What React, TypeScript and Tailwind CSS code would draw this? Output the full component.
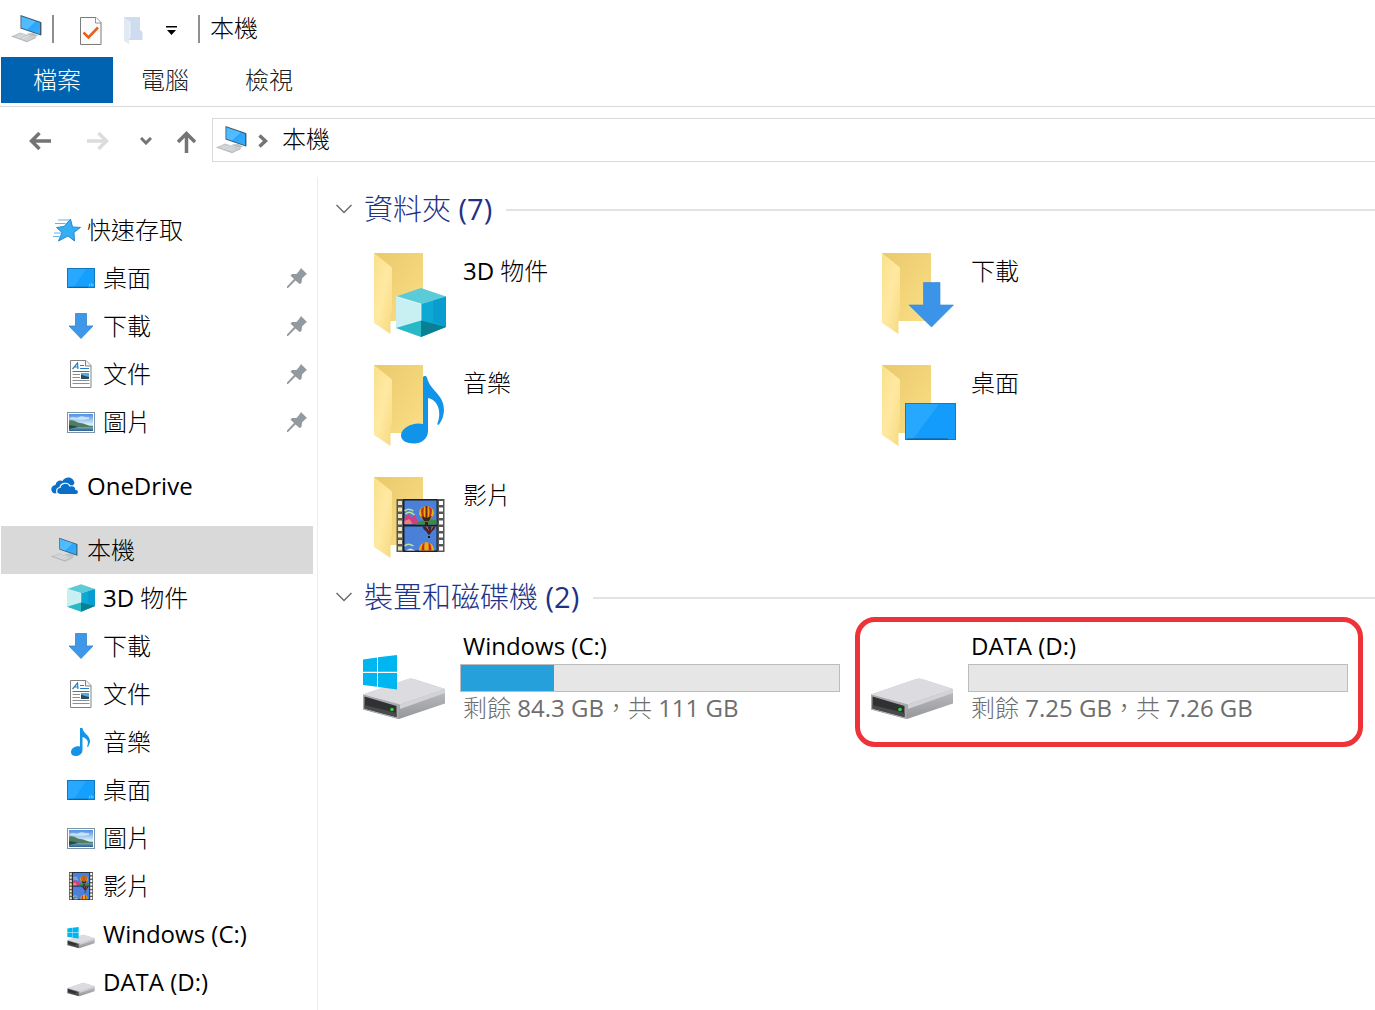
import { useState } from "react";
import type { ReactNode } from "react";

type IconProps = { className?: string };

function ComputerIcon({ className }: IconProps) {
  return (
    <svg viewBox="0 0 32 30" className={className} aria-hidden="true">
      <defs>
        <linearGradient id="screen" x1="0" y1="0" x2="1" y2="1">
          <stop offset="0" stopColor="#4db8ff" />
          <stop offset="0.5" stopColor="#52bdff" />
          <stop offset="0.55" stopColor="#2ba6fa" />
          <stop offset="1" stopColor="#36adfb" />
        </linearGradient>
      </defs>
      <path d="M16 19.500l6-.5 5 2.500-3 1.500-7-2z" fill="#b9bfc4" />
      <path d="M9.500 1l20.500 7v13.500L9.500 14.500z" fill="#3b5568" />
      <path d="M10.300 2.200l18.700 6.500v11.500L10.300 13.800z" fill="url(#screen)" />
      <path d="M29.900 8l.8.600v12.500l-.8.500z" fill="#8c979e" />
      <path d="M.5 22.200l8.500-3.600 16 5-9 4.200z" fill="#c4c7c9" />
      <path d="M3.500 22l14 4.400M5.500 21.100l14 4.400M7.500 20.200l14 4.400M6 24l8-3.900M10.500 25.200l8-3.700" stroke="#e6e8e9" strokeWidth="0.500" fill="none" />
      <path d="M.5 22.200l15.500 5.600 9-4.200" stroke="#8e9295" strokeWidth="0.500" fill="none" />
    </svg>
  );
}

function CheckDocIcon({ className }: IconProps) {
  return (
    <svg viewBox="0 0 22 28" className={className} aria-hidden="true">
      <path d="M.5.5h15.500l5 5v22H.5z" fill="#fbfbfb" stroke="#7b7b7b" />
      <path d="M15.500.5v5.500h5.500" fill="#fff" stroke="#7b7b7b" strokeWidth="0.800" />
      <path d="M3.500 15.500l5 5L18 10.500" fill="none" stroke="#e8601c" strokeWidth="2.600" />
    </svg>
  );
}

function PaleFolderIcon({ className }: IconProps) {
  return (
    <svg viewBox="0 0 19 27" className={className} aria-hidden="true">
      <path d="M0 0h16v13l2.500 2v8H5z" fill="#cfdcf0" />
      <path d="M0 .5l6 4V21l-1 1v5l-5-3z" fill="#e1e9f5" />
      <path d="M6 4.500V21" stroke="#f3f6fb" strokeWidth="0.800" />
    </svg>
  );
}

function StarIcon({ className }: IconProps) {
  return (
    <svg viewBox="0 0 28 24" className={className} aria-hidden="true">
      <path d="M17.500 1l2 8 8 .4-6.500 5 .5 8.600-6.500-5L5.500 23l3.500-8.500-5.500-5 7.500-1z" fill="#35aef3" stroke="#1b83c9" strokeWidth="0.900" />
      <path d="M5 2h11M2 5.500h10.500M1 15h7M0 18.500h6.500" stroke="#63b5e8" strokeWidth="1" />
    </svg>
  );
}

function DesktopIcon({ className }: IconProps) {
  return (
    <svg viewBox="0 0 28 20" className={className} aria-hidden="true">
      <rect x="0.500" y="0.500" width="27" height="19" fill="#16a0fd" stroke="#1277bb" />
      <path d="M1 1h18L7 19H1z" fill="#28a8ff" />
      <path d="M2 19.200h19" stroke="#0b5788" strokeWidth="0.800" />
      <path d="M22.500 18v-2M24.500 18v-3M26 18v-2" stroke="#84ccff" strokeWidth="0.800" />
    </svg>
  );
}

function DownloadIcon({ className }: IconProps) {
  return (
    <svg viewBox="0 0 26 26" className={className} aria-hidden="true">
      <path d="M7.500.5h11V13H25L13 25.500 1 13h6.500z" fill="#3f97e8" stroke="#2f85d4" strokeWidth="0.800" />
    </svg>
  );
}

function DocumentIcon({ className }: IconProps) {
  return (
    <svg viewBox="0 0 22 28" className={className} aria-hidden="true">
      <path d="M.5.5H16l5 5v22H.5z" fill="#fff" stroke="#838383" />
      <path d="M15.500.5v5.500h5.500" fill="#f4f4f4" stroke="#838383" />
      <path d="M2.500 9l5-6 .5 6M4.500 7h3.500" fill="none" stroke="#2a80bd" strokeWidth="1.200" />
      <path d="M10 5.500h4M10 8.500h9M2.500 11.500h17" fill="none" stroke="#2a80bd" strokeWidth="1" />
      <path d="M2.500 14.500H10M2.500 17.500H10M2.500 20.500h17M2.500 23.500h17" stroke="#8c9092" strokeWidth="1" />
      <rect x="11" y="13" width="8" height="6" fill="#58abd9" />
      <path d="M11 14.500l4 1.500 4 1v2h-8z" fill="#244d60" />
    </svg>
  );
}

function PictureIcon({ className }: IconProps) {
  return (
    <svg viewBox="0 0 28 21" className={className} aria-hidden="true">
      <defs>
        <linearGradient id="sky" x1="0" y1="0" x2="0" y2="1">
          <stop offset="0" stopColor="#4b91e4" />
          <stop offset="0.600" stopColor="#d7edfc" />
        </linearGradient>
        <linearGradient id="lake" x1="0" y1="0" x2="0" y2="1">
          <stop offset="0" stopColor="#8cb6ca" />
          <stop offset="1" stopColor="#2c5f8f" />
        </linearGradient>
      </defs>
      <rect x="0.500" y="0.500" width="27" height="20" fill="#fff" stroke="#7d93a5" />
      <rect x="2" y="2" width="24" height="17" fill="url(#sky)" />
      <path d="M3 6c4-2 6 1 9-1s7 1 10 0v2c-6 1-12 1-19 0z" fill="#fff" opacity="0.600" />
      <rect x="2" y="14" width="24" height="5" fill="url(#lake)" />
      <path d="M2 8.500c4-1 6 1 9 2s5 .5 8 2 5 1 7 1.500v1H11l-9 1.500z" fill="#507d5e" />
      <path d="M2 13c3 0 6 1 9 2l-9 2z" fill="#244e4c" />
    </svg>
  );
}

function CloudIcon({ className }: IconProps) {
  return (
    <svg viewBox="0 0 28 18" className={className} aria-hidden="true">
      <path d="M4 16.500c-5-1-5-8 .5-8.500C5 4 9 2.500 11.500 4 14-1 22-1 23.500 6L20 12z" fill="#0a6fc9" />
      <path d="M9 17.500c-4.500-.5-4.500-6.500 0-7 .5-4.500 7.500-6 10-1.500 4-1 6 1 5.800 3.500 3.700 0 3.500 5 .2 5z" fill="#0a6fc9" stroke="#fff" strokeWidth="1.200" />
    </svg>
  );
}

// Faces only, on a 50x49 canvas; shared by the tree and the folder overlay.
function CubeShape() {
  return (
    <>
      <path d="M0 8.500L25 0l25 8.500L25 16z" fill="#5ccbd8" />
      <path d="M0 8.500L25 16v33L0 40z" fill="#c8eff2" />
      <path d="M25 16l25-7.500V39L25 49z" fill="#0da9d2" />
      <path d="M37 12.500l13-4V39l-13-5z" fill="#0794cf" opacity="0.600" />
      <path d="M0 40l25-7.500V49z" fill="#29b8c8" />
      <path d="M25 32.500L50 39 25 49z" fill="#087f92" />
      <path d="M0 8.500L25 16v16.500" fill="none" stroke="#e3f9fa" strokeWidth="0.800" />
    </>
  );
}

function CubeIcon({ className }: IconProps) {
  return (
    <svg viewBox="0 0 50 49" className={className} aria-hidden="true">
      <CubeShape />
    </svg>
  );
}

function MusicIcon({ className }: IconProps) {
  return (
    <svg viewBox="0 0 20 28" className={className} aria-hidden="true">
      <path d="M9 0h2.500c0 5 7.500 7 7.500 13 0 2-.8 4-2 6l-1-.5c2.500-5-.5-8.500-4.500-9.500v13c0 3.500-3 6-6.500 6S0 26.500 0 24c0-4 5-6.500 9-5.500z" fill="#1593e6" />
    </svg>
  );
}

function Balloon({ x, y }: { x: number; y: number }) {
  return (
    <g transform={`translate(${x} ${y})`}>
      <path d="M0 7a7.500 7 0 0 1 15 0c0 3-3 5-5 8H5C3 12 0 10 0 7z" fill="#e8ae13" />
      <path d="M2.500 2.500c-1 3 0 8 3 12h1C4 9 4 4 5.500.5zM12.500 2.500c1 3 0 8-3 12h-1C11 9 11 4 9.500.5z" fill="#c9281d" />
      <path d="M6.500 0h2v14h-2z" fill="#6e2220" />
      <path d="M2 10l5.500 2 5.500-2-3 5H5z" fill="#3b2524" />
      <rect x="6" y="16" width="3" height="3" fill="#33231f" />
    </g>
  );
}

// One film strip frame set on a 48x53 canvas.
function FilmShape() {
  const holes = [2, 8.5, 15, 21.5, 28, 34.5, 41, 47.5];
  return (
    <>
      <rect width="48" height="53" fill="#565656" />
      <rect x="6.500" width="34.500" height="53" fill="#1d1f24" />
      {holes.map((y) => (
        <g key={y}>
          <rect x="1.500" y={y} width="4" height="4" fill="#efe3b8" />
          <rect x="42.500" y={y} width="4" height="4" fill="#fff" />
        </g>
      ))}
      <rect x="8" y="1.500" width="32" height="24" fill="#4a80d8" />
      <path d="M8 12c3-3 6-2 9 0M9 15c3-3 6-2 9 1" stroke="#bfe38e" strokeWidth="1.500" fill="none" />
      <path d="M8 19l4-4 3 4 3-3 5 9H8z" fill="#d43d80" />
      <path d="M8 22l5-2 3 5H8z" fill="#ef8074" />
      <path d="M19 25.500c5-5 14-6 21-4v4z" fill="#3b8b42" />
      <rect x="8" y="27.500" width="32" height="24" fill="#4a80d8" />
      <path d="M8 47c3-3 6-2 9 0" stroke="#bfe38e" strokeWidth="1.500" fill="none" />
      <path d="M9 51.500l5-2 5 2z" fill="#e8edf4" />
      <path d="M26 27.500h13c-1 4-4 4-5.500 8h-2c-1-4-4.500-4-5.500-8z" fill="#3e2330" />
      <path d="M29 27.500h2l2 5zM35 27.500h2l-3 5z" fill="#d8542c" />
      <rect x="31.500" y="37" width="2" height="2" fill="#1a1a1a" />
      <Balloon x={22.5} y={7} />
      <path d="M22.500 51.500c0-11 15-11 15 0z" fill="#e8ae13" />
      <path d="M25 51.500c0-4 1-7 3-8 0 3-.5 5 0 8zM35 51.500c0-4-1-7-3-8 0 3 .5 5 0 8z" fill="#c9281d" />
    </>
  );
}

function FilmIcon({ className }: IconProps) {
  return (
    <svg viewBox="0 0 48 53" preserveAspectRatio="none" className={className} aria-hidden="true">
      <FilmShape />
    </svg>
  );
}

function DriveIcon({ className, system }: IconProps & { system?: boolean }) {
  return (
    <svg viewBox="0 0 84 66" className={className} aria-hidden="true">
      <defs>
        <linearGradient id="drive-side" x1="0" y1="0" x2="0" y2="1">
          <stop offset="0" stopColor="#c9cacd" />
          <stop offset="1" stopColor="#96979a" />
        </linearGradient>
      </defs>
      <path d="M1 39.500L46 24q3-1 6 0l31 10v14.500L37 64 1 54.500z" fill="url(#drive-side)" />
      <path d="M1 39.500L46 24q3-1 6 0l31 10-45 15.500z" fill="#dcdce0" />
      <path d="M38 49.500L83 34v4L38 54z" fill="#d3d3d6" />
      <path d="M1 39.500l35.500 10V64L1 54.500z" fill="#a9aaac" />
      <path d="M2.500 41.500L34.500 51v11L2.500 53.500z" fill="#303132" />
      <path d="M2.500 50l32 8v4l-32-8.500z" fill="#484a4b" />
      <circle cx="30" cy="54.500" r="1.800" fill="#30d43a" />
      {system && (
        <path d="M1 4.500L15 2.500v14.300H1zM16 2.300L35 0v16.800H16zM1 18h14v13.800L1 30zM16 18h19v16.500L16 32z" fill="#00b6f1" />
      )}
    </svg>
  );
}

function FolderIcon({ children }: { children: ReactNode }) {
  return (
    <svg viewBox="0 0 80 88" className="h-[88px] w-20 shrink-0" aria-hidden="true">
      <defs>
        <linearGradient id="folder-back" x1="0" y1="0" x2="1" y2="1">
          <stop offset="0" stopColor="#e9c96b" />
          <stop offset="1" stopColor="#fbde86" />
        </linearGradient>
        <linearGradient id="folder-front" x1="0" y1="0" x2="1" y2="1">
          <stop offset="0" stopColor="#fae08b" />
          <stop offset="0.500" stopColor="#ffe9a2" />
          <stop offset="1" stopColor="#f6d980" />
        </linearGradient>
      </defs>
      <path d="M2 0h49v68H18z" fill="url(#folder-back)" />
      <path d="M2 0l18 14.500V59l-1.500 2v20L2 70z" fill="url(#folder-front)" />
      {children}
    </svg>
  );
}

function PinIcon({ className }: IconProps) {
  return (
    <svg viewBox="0 0 20 20" className={className} aria-hidden="true">
      <path d="M14 0l6 6-1.500 1L15 10.500l-.5 4.500-2 1-4-3.500L1 20H0v-1.500l7-7.500-3.500-3.500L5 6h4.500l3-3.500z" fill="#939a9f" />
    </svg>
  );
}

function ArrowIcon({ className }: IconProps) {
  return (
    <svg viewBox="0 0 22 18" className={className} fill="none" stroke="currentColor" strokeWidth="3.500" aria-hidden="true">
      <path d="M22 9H2.500M10.500 1L2.500 9l8 8" />
    </svg>
  );
}

type TreeItem = { label: string; icon: ReactNode; pinned?: boolean };

const icons = {
  cube: <CubeIcon className="h-7 w-7" />,
  desktop: <DesktopIcon className="h-5 w-7" />,
  download: <DownloadIcon className="h-[26px] w-[26px]" />,
  document: <DocumentIcon className="h-7 w-[22px]" />,
  picture: <PictureIcon className="h-[21px] w-7" />,
  music: <MusicIcon className="h-7 w-5" />,
  film: <FilmIcon className="h-7 w-6" />,
};

const quickAccess: TreeItem[] = [
  { label: "桌面", icon: icons.desktop, pinned: true },
  { label: "下載", icon: icons.download, pinned: true },
  { label: "文件", icon: icons.document, pinned: true },
  { label: "圖片", icon: icons.picture, pinned: true },
];

const computerItems: TreeItem[] = [
  { label: "3D 物件", icon: icons.cube },
  { label: "下載", icon: icons.download },
  { label: "文件", icon: icons.document },
  { label: "音樂", icon: icons.music },
  { label: "桌面", icon: icons.desktop },
  { label: "圖片", icon: icons.picture },
  { label: "影片", icon: icons.film },
  { label: "Windows (C:)", icon: <DriveIcon system className="mt-2 h-[22px] w-7" /> },
  { label: "DATA (D:)", icon: <DriveIcon className="mt-2 h-[22px] w-7" /> },
];

const folders = [
  {
    label: "3D 物件",
    overlay: (
      <g transform="translate(24 35)">
        <CubeShape />
      </g>
    ),
  },
  {
    label: "下載",
    overlay: <path d="M43.500 29.500H60V52h13.500L51.500 74 29 52h14.500z" fill="#3b94e7" stroke="#2f86d8" strokeWidth="0.600" />,
  },
  {
    label: "音樂",
    overlay: (
      <path
        d="M51 12.500c0-2 3.500-2 4 0C58 26 72 29 72 45c0 5-2 10.500-5 14.500-1 .8-2 0-1.500-1C70 47 66 35 56 33v33c0 8-7 12.500-14 12.500-7.500 0-13-3-13-8 0-8 13-14 22-11.500z"
        fill="#0f94ea"
      />
    ),
  },
  {
    label: "桌面",
    overlay: (
      <>
        <rect x="25.500" y="38.500" width="50" height="36" fill="#139cfb" stroke="#1679ba" />
        <path d="M26 39h33L33 74h-7z" fill="#27a8ff" />
        <path d="M27 74h41" stroke="#0d5580" strokeWidth="1" />
      </>
    ),
  },
  {
    label: "影片",
    overlay: (
      <g transform="translate(24.500 22)">
        <FilmShape />
      </g>
    ),
  },
];

const drives = [
  { label: "Windows (C:)", info: "剩餘 84.3 GB\uff0c共 111 GB", used: 24.6, system: true, marked: false },
  { label: "DATA (D:)", info: "剩餘 7.25 GB\uff0c共 7.26 GB", used: 0, system: false, marked: true },
];

function RootRow({ label, icon, selected }: { label: string; icon: ReactNode; selected?: boolean }) {
  return (
    <a
      href="#"
      className={`ml-px mr-1 flex h-12 items-center gap-1 pl-[50px] ${selected ? "bg-[#d9d9d9]" : ""}`}
    >
      <span className="flex w-8 justify-center">{icon}</span>
      <span>{label}</span>
    </a>
  );
}

function TreeRow({ label, icon, pinned }: TreeItem) {
  return (
    <a href="#" className="flex h-12 items-center gap-2 pl-[67px] pr-[10px]">
      <span className="flex w-7 justify-center">{icon}</span>
      <span>{label}</span>
      {pinned && <PinIcon className="ml-auto h-5 w-5" />}
    </a>
  );
}

function Section({ title, count, children }: { title: string; count: number; children: ReactNode }) {
  const [open, setOpen] = useState(true);

  return (
    <section>
      <h2 className="flex h-10 items-center gap-3.5 pl-[18px]">
        <button
          type="button"
          aria-expanded={open}
          onClick={() => setOpen(!open)}
          className="flex items-center gap-3 text-[29px] leading-10 text-[#1e3287]"
        >
          <svg viewBox="0 0 16 10" className="h-2.5 w-4" fill="none" stroke="#6d6d6d" strokeWidth="1.500" aria-hidden="true">
            <path d="M.5 1L8 8.500 15.500 1" />
          </svg>
          {title} ({count})
        </button>
        <span className="mt-0.5 h-0.5 flex-1 bg-[#e2e2e2]" />
      </h2>
      {open && children}
    </section>
  );
}

export default function App() {
  return (
    <div className="flex min-h-screen flex-col overflow-x-hidden bg-white font-['Open_Sans','Noto_Sans_CJK_TC_Light','Noto_Sans_CJK_TC',sans-serif] text-2xl leading-8 text-black">
      <header>
        <div className="flex h-[57px] items-center pl-[11px]">
          <ComputerIcon className="h-[30px] w-8" />
          <span className="ml-[9px] h-7 w-0.5 bg-[#8f8f8f]" />
          <button type="button" aria-label="內容" className="ml-[26px]">
            <CheckDocIcon className="mt-1 h-7 w-[22px]" />
          </button>
          <button type="button" aria-label="新增資料夾" className="ml-[22px]">
            <PaleFolderIcon className="mt-1 h-[27px] w-[19px]" />
          </button>
          <button type="button" aria-label="自訂快速存取工具列" className="ml-[23px]">
            <svg viewBox="0 0 11 9" className="mt-1 h-[9px] w-[11px]" aria-hidden="true">
              <path d="M0 0h11v1.500H0zM1 4h9L5.500 9z" />
            </svg>
          </button>
          <span className="ml-[21px] h-7 w-0.5 bg-[#8f8f8f]" />
          <h1 className="ml-[10px] pb-0.5">本機</h1>
        </div>

        <nav className="flex h-[50px] items-start border-b border-[#dadada] pl-px text-[#222222]">
          <button type="button" className="h-[46px] w-28 bg-[#0063b1] text-white">
            檔案
          </button>
          <button type="button" className="h-[46px] px-7">
            電腦
          </button>
          <button type="button" className="h-[46px] px-7">
            檢視
          </button>
        </nav>

        <div className="flex items-center pb-[15px] pl-[29px] pt-[11px] text-[#747474]">
          <button type="button" aria-label="上一頁">
            <ArrowIcon className="mt-0.5 h-[18px] w-[22px]" />
          </button>
          <button type="button" aria-label="下一頁" className="ml-9 text-[#dcdcdc]">
            <ArrowIcon className="mt-0.5 h-[18px] w-[22px] rotate-180" />
          </button>
          <button type="button" aria-label="最近的位置" className="ml-[31px]">
            <svg viewBox="0 0 12 8" className="mt-0.5 h-2 w-3" fill="none" stroke="currentColor" strokeWidth="3" aria-hidden="true">
              <path d="M1 1l5 5 5-5" />
            </svg>
          </button>
          <button type="button" aria-label="上移" className="ml-[25px]">
            <svg viewBox="0 0 19 22" className="mt-1 h-[22px] w-[19px]" fill="none" stroke="currentColor" strokeWidth="3.500" aria-hidden="true">
              <path d="M9.500 22V2.500M1 11l8.500-8.500L18 11" />
            </svg>
          </button>
          <div className="ml-4 flex h-11 flex-1 items-center border border-r-0 border-[#d9d9d9] pl-[3px] text-black">
            <ComputerIcon className="h-[30px] w-8" />
            <svg viewBox="0 0 10 14" className="ml-[10px] mt-0.5 h-3.5 w-2.5" fill="none" stroke="#747474" strokeWidth="3.500" aria-hidden="true">
              <path d="M1.500 1.500L7.500 7l-6 5.500" />
            </svg>
            <button type="button" className="ml-3.5 pb-0.5">
              本機
            </button>
          </div>
        </div>
      </header>

      <div className="flex flex-1">
        <aside className="w-[318px] shrink-0 border-r border-[#ededed] pt-[29px]">
          <RootRow label="快速存取" icon={<StarIcon className="h-6 w-7" />} />
          {quickAccess.map((item) => (
            <TreeRow key={item.label} {...item} />
          ))}
          <div className="my-4">
            <RootRow label="OneDrive" icon={<CloudIcon className="mr-1 h-[18px] w-7" />} />
          </div>
          <RootRow label="本機" selected icon={<ComputerIcon className="mr-1 h-[30px] w-8" />} />
          {computerItems.map((item) => (
            <TreeRow key={item.label} {...item} />
          ))}
        </aside>

        <main className="min-w-0 flex-1 pt-3">
          <Section title="資料夾" count={7}>
            <div className="ml-[29px] mt-3 grid grid-cols-[repeat(auto-fill,508px)]">
              {folders.map((folder) => (
                <button key={folder.label} type="button" className="flex h-28 items-start gap-[11px] pl-[25px] pt-3 text-left">
                  <FolderIcon>{folder.overlay}</FolderIcon>
                  <span className="pt-0.5">{folder.label}</span>
                </button>
              ))}
            </div>
          </Section>

          <Section title="裝置和磁碟機" count={2}>
            <div className="ml-[29px] grid grid-cols-[repeat(auto-fill,508px)]">
              {drives.map((drive) => (
                <button
                  key={drive.label}
                  type="button"
                  className={`flex h-[130px] items-start rounded-[20px] border-[5px] pl-[10px] pt-2 text-left ${drive.marked ? "border-[#ee3338]" : "border-transparent"}`}
                >
                  <DriveIcon system={drive.system} className="mt-[25px] h-[66px] w-[84px] shrink-0" />
                  <span className="ml-3.5 flex w-[380px] flex-col">
                    <span className="pl-[3px]">{drive.label}</span>
                    <span
                      role="progressbar"
                      aria-label={drive.label}
                      aria-valuenow={drive.used}
                      className="mt-0.5 block h-7 border border-[#bcbcbc] bg-[#e6e6e6]"
                    >
                      <span className="block h-full bg-[#26a0da]" style={{ width: `${drive.used}%` }} />
                    </span>
                    <span className="pl-[3px] text-[#6d6d6d]">{drive.info}</span>
                  </span>
                </button>
              ))}
            </div>
          </Section>
        </main>
      </div>
    </div>
  );
}
